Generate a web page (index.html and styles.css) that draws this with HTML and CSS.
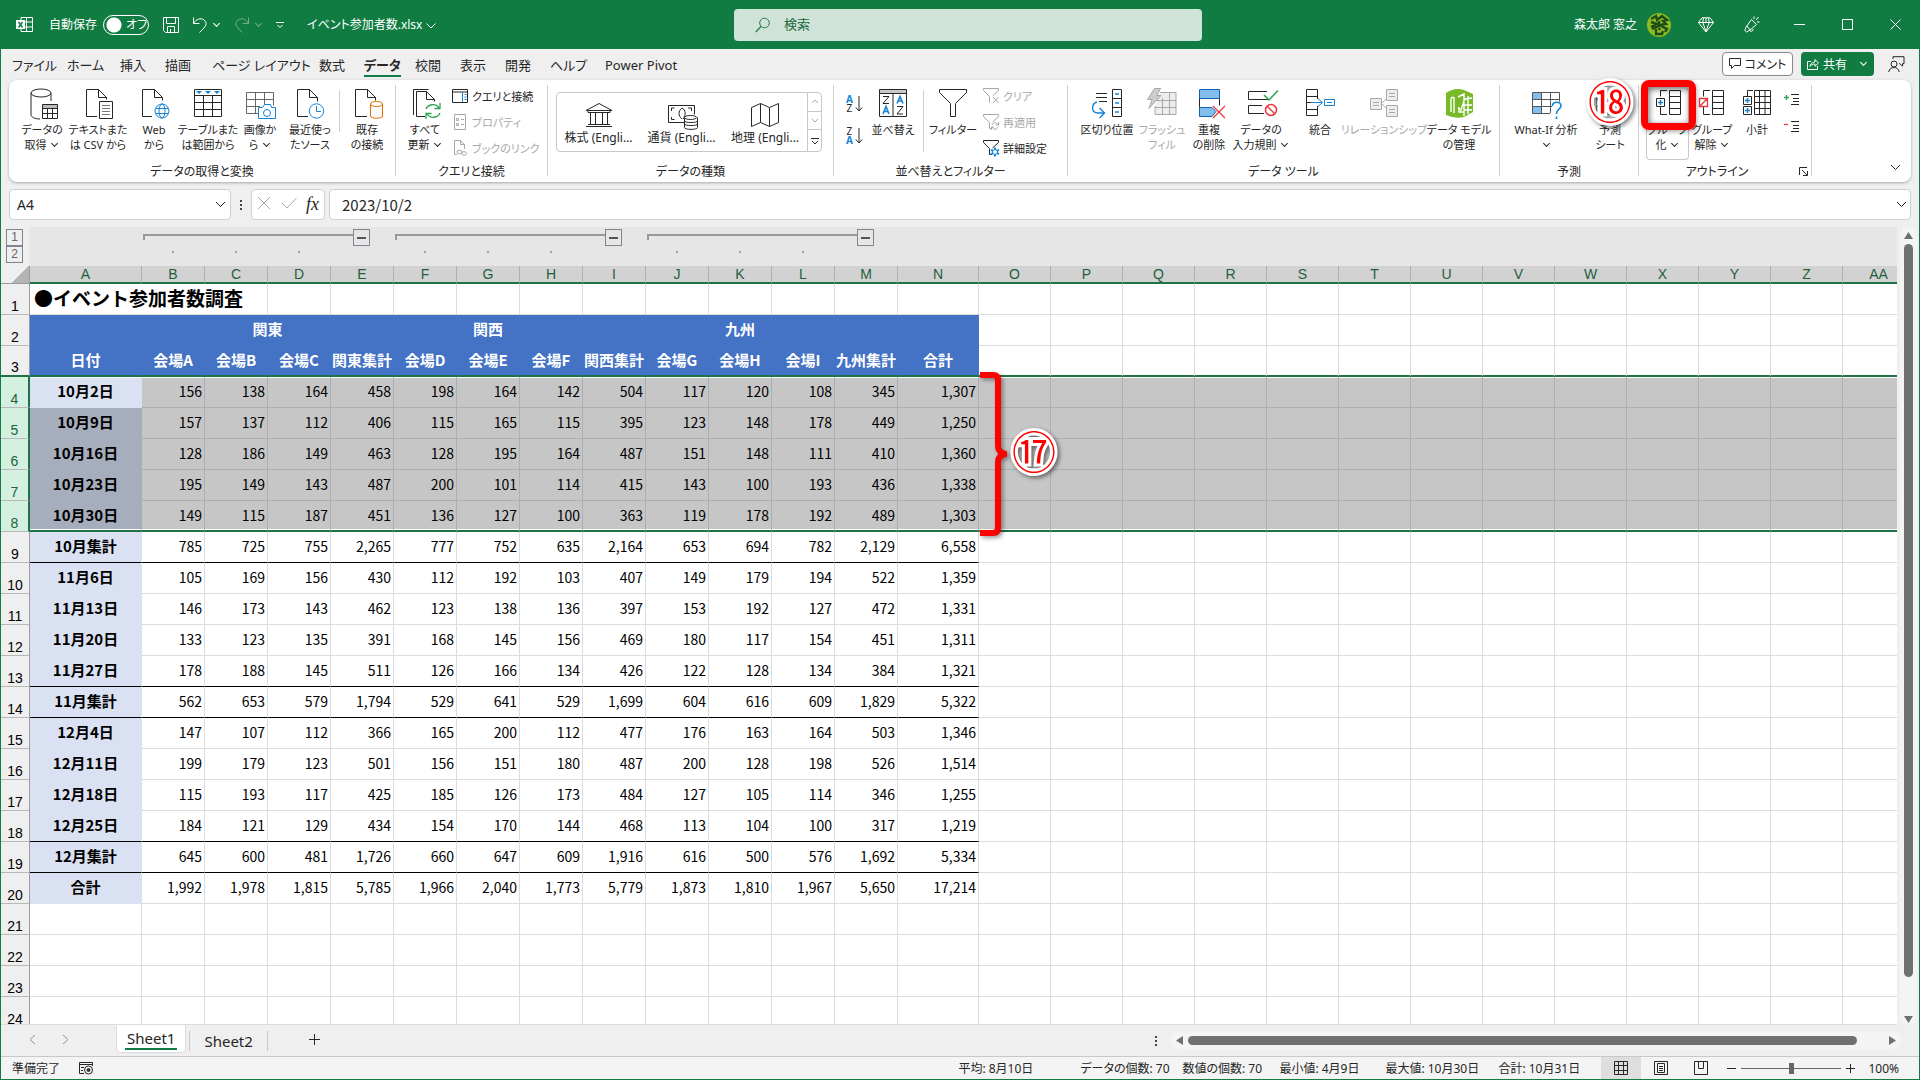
FILE: index.html
```html
<!DOCTYPE html>
<html lang="ja">

<head>
    <meta charset="UTF-8">
    <title>イベント参加者数.xlsx - Excel</title>
    <link rel="stylesheet" href="styles.css">
</head>

<body>
    <header class="titlebar">
        <svg class="app-logo" width="18" height="18" viewBox="0 0 18 18" fill="none" stroke="#fff">
            <path d="M5 4V1.500h11.500v14H5V13M10.500 1.500v14M5 6h11.500M5 11h11.500" />
            <rect x="0" y="4" width="9" height="9" fill="#fff" stroke="none" />
            <path d="M2.500 6l4 5.500M6.500 6l-4 5.500" stroke="#107c41" stroke-width="1.500" />
        </svg>
        <label class="autosave">自動保存
            <input type="checkbox" class="autosave-input">
            <span class="autosave-switch">オフ</span>
        </label>
        <div class="quick-access">
            <button aria-label="保存"><svg width="16" height="16" viewBox="0 0 16 16"><path d="M.5.5h15v15h-13l-2-2zM3.500.5v6h9v-6M4.500 15.500v-6h7v6M7.500 12v3" /></svg></button>
            <button aria-label="元に戻す"><svg width="16" height="16" viewBox="0 0 16 16"><path d="M1.500.5v6h6M1.500 6.500C4 2 9 .5 12 3s2.500 5 0 8l-4.500 4.500" /></svg><i class="caret"></i></button>
            <button class="faded" aria-label="やり直し"><svg width="16" height="16" viewBox="0 0 16 16"><path d="M14.500.5v6h-6M14.500 6.500C12 2 7 .5 4 3s-2.500 5 0 8l4.500 4.500" /></svg><i class="caret"></i></button>
            <button aria-label="カスタマイズ"><svg width="8" height="8" viewBox="0 0 8 8"><path d="M0 1.500h8M1.500 4l2.500 2.500L6.500 4" /></svg></button>
        </div>
        <button class="file-name">イベント参加者数.xlsx <svg width="10" height="6" viewBox="0 0 10 6"><path d="M.5.500L5 5 9.500.500" /></svg></button>
        <label class="search">
            <svg width="16" height="16" viewBox="0 0 16 16" fill="none" stroke="#2b7a50"><circle cx="9.500" cy="6" r="4.800" /><path d="M6 9.500L.8 15" stroke-width="1.300" /></svg>
            <input type="text" placeholder="検索" aria-label="検索">
        </label>
        <div class="account">
            <span>森太郎 窓之</span>
            <svg width="24" height="24" viewBox="0 0 24 24"><circle cx="12" cy="12" r="12" fill="#8dbb22" /><path d="M4 6l5-3 1 4 5-4 5 4-4 1 3 3-6 1M4 9l6 2-6 3M12 8v5l-7 3M14 13l6 3-2 3M9 16v5h6l1-3M12 15l1 2" fill="none" stroke="#1d4d16" stroke-width="2.400" /></svg>
        </div>
        <button class="title-icon" aria-label="プレミアム"><svg width="16" height="16" viewBox="0 0 16 16"><path d="M4 .8h8l3.500 4.700L8 15 .5 5.500zM.5 5.500h15M5.500.8L4.800 5.500 8 14.500l3.200-9L10.500.8M8 .8v4.700" /></svg></button>
        <button class="title-icon" aria-label="近日公開"><svg width="16" height="17" viewBox="0 0 16 17"><path d="M7.500 3.500l5 5L6 14l-3.500 2L.8 14.500 2 11zM3 10l3 4c0 2 3 2 3-1M10 3V.5M12 4l2.500-3M13 6h2.500" /></svg></button>
        <button class="window-button" aria-label="最小化"><svg width="11" height="11" viewBox="0 0 11 11"><path d="M0 5.500h11" /></svg></button>
        <button class="window-button" aria-label="最大化"><svg width="11" height="11" viewBox="0 0 11 11"><path d="M.5.5h10v10H.5z" /></svg></button>
        <button class="window-button" aria-label="閉じる"><svg width="11" height="11" viewBox="0 0 11 11"><path d="M.5.5l10 10M10.500.5l-10 10" /></svg></button>
    </header>

    <nav class="tabs">
        <div class="tab-list">
            <a href="#">ファイル</a>
            <a href="#">ホーム</a>
            <a href="#">挿入</a>
            <a href="#">描画</a>
            <a href="#">ページ レイアウト</a>
            <a href="#">数式</a>
            <a href="#" class="active">データ</a>
            <a href="#">校閲</a>
            <a href="#">表示</a>
            <a href="#">開発</a>
            <a href="#">ヘルプ</a>
            <a href="#">Power Pivot</a>
        </div>
        <div class="tab-actions">
            <button class="comment-button"><svg width="12" height="12" viewBox="0 0 12 12"><path d="M.5.500h11v7H5.500l-3 3v-3h-2z" /></svg>コメント</button>
            <button class="share-button"><svg width="12" height="12" viewBox="0 0 12 12"><path d="M4 3.500H.5v8h10V8M3 8.500C3.500 5 6 4 8 4V1.500L11.500 5 8 8.300V6C6 6 4 6.500 3 8.500z" /></svg>共有<i class="caret"></i></button>
            <button class="presence-button" aria-label="共同作業"><svg width="17" height="17" viewBox="0 0 17 17"><circle cx="6" cy="8" r="3" /><path d="M.8 16c.4-6 9.800-6 10.400 0M5 3V.7h11v7h-1.500v2.500L12 7.700h-1" /></svg></button>
        </div>
    </nav>

    <section class="ribbon">
        <div class="group group-get">
            <div class="group-body">
                <button class="tool"><svg viewBox="0 0 32 32"><path d="M5 5v22c0 2 4 4 9 4M25 5v8" /><ellipse cx="15" cy="5" rx="10" ry="4" /><path d="M16.500 16.500h15v14h-15zM16.500 20.500h15M16.500 25.500h15M21.500 20v11M26.500 20v11" /><path d="M17 17h14v3H17z" fill="#bbb" stroke="none" /></svg>データの<br>取得 <i class="caret"></i></button>
                <button class="tool"><svg viewBox="0 0 32 32"><path d="M15 28.500H4.500v-27h12l8 8v2M16.500 1.500v8h8" /><path d="M17.500 13.500h13v17h-13z" fill="#fff" /><path d="M20 17.500h8M20 20.500h8M20 23.500h8M20 26.500h8" stroke="#777" /></svg>テキストまた<br>は CSV から</button>
                <button class="tool"><svg viewBox="0 0 32 32"><path d="M14 28.500H4.500v-27h12l8 8v3M16.500 1.500v8h8" /><g class="blue"><circle cx="24" cy="23" r="7" fill="#fff" /><ellipse cx="24" cy="23" rx="3" ry="7" /><path d="M18 20.500h12M17.500 25.500h13" /></g></svg>Web<br>から</button>
                <button class="tool"><svg viewBox="0 0 32 32"><path d="M2.500 1.500h27v27h-27zM2.500 7.500h27M2.500 14.500h27M2.500 21.500h27M11.500 8v20M20.500 8v20" /><path d="M4 3h6l-3 3zM13 3h6l-3 3zM22 3h6l-3 3z" fill="#1484d6" stroke="none" /></svg>テーブルまた<br>は範囲から</button>
                <button class="tool"><svg viewBox="0 0 32 32"><path d="M14 25.500H2.500v-21h27v13M2.500 11.500h27M2.500 18.500H16M11.500 5v20M20.500 5v12" stroke="#666" /><path class="blue" d="M14.500 19.500h4l2-3h6l1 3h4v11h-17z" fill="#fff" /><circle class="blue" cx="23" cy="25" r="3.500" /></svg>画像か<br>ら <i class="caret"></i></button>
                <button class="tool"><svg viewBox="0 0 32 32"><path d="M14 28.500H3.500v-27h12l8 8v4M15.500 1.500v8h8" /><g class="blue"><circle cx="22.500" cy="23" r="7.200" fill="#fff" /><path d="M22.500 18v5.500H27" /></g></svg>最近使っ<br>たソース</button>
                <span class="tool-separator"></span>
                <button class="tool"><svg viewBox="0 0 32 32"><path d="M16 28.500H4.500v-27h12l8 8v3M16.500 1.500v8h8" /><path d="M19.500 16v12c0 3 12 3 12 0V16" fill="#fafafa" stroke="#e06c00" /><ellipse cx="25.500" cy="16" rx="6" ry="2.500" fill="#fff" stroke="#e06c00" /></svg>既存<br>の接続</button>
            </div>
            <h2 class="group-title">データの取得と変換</h2>
        </div>

        <div class="group group-query">
            <div class="group-body">
                <button class="tool"><svg viewBox="0 0 32 32"><path d="M4.500 27V1.500h15M16 28.500H7.500v-25h10l8 8v2M17.500 3.500v8h8" /><path d="M17 21c2-5 10-6 13-1M31 15v5.500h-5.500M31 25c-2 5-10 6-13 1M17 31v-5.500h5.500" stroke="#2da44e" stroke-width="1.300" /></svg>すべて<br>更新 <i class="caret"></i></button>
                <div class="tool-stack">
                    <button><svg viewBox="0 0 16 16"><path d="M.5 1.500h15v13H.5zM.5 4h15" /><path class="blue" d="M10.500 4v10M12.500 6.500h2M12.500 9h2M12.500 11.500h2" /></svg>クエリと接続</button>
                    <button disabled><svg viewBox="0 0 16 16"><path d="M2.500.5h11v15h-11zM4.500 4.500h2v2h-2zM4.500 9.500h2v2h-2zM9 5.500h3M9 10.500h3" /></svg>プロパティ</button>
                    <button disabled><svg viewBox="0 0 16 16"><path d="M5 14.500H2.500V.5h6l4 4V9M8.500.5v4h4" /><ellipse cx="7.500" cy="12" rx="2.500" ry="1.800" /><ellipse cx="12" cy="13.500" rx="2.500" ry="1.800" /></svg>ブックのリンク</button>
                </div>
            </div>
            <h2 class="group-title">クエリと接続</h2>
        </div>

        <div class="group group-types">
            <div class="gallery">
                <button class="gallery-item"><svg viewBox="0 0 28 26"><path d="M1 8.500L14 1.500l13 7zM3 9v1.500h22V9M5.500 11v11M10.500 11v11M17.500 11v11M22.500 11v11M3 22.500h22M1 24.500h26" /></svg>株式 (Engli…</button>
                <button class="gallery-item"><svg viewBox="0 0 28 26"><path d="M17 20.500H.5v-17h26v9M3.500 9v-3h3M3.500 15v2.500h3M20 6h3.500v3M14 17c-4-3-4-8 0-11 4 2 4 7 1 11" /><path d="M16.500 15.500v10c0 2.500 13 2.500 13 0v-10M16.500 19c0 2 13 2 13 0M16.500 22c0 2 13 2 13 0" fill="#fff" /><ellipse cx="22.500" cy="15.500" rx="6" ry="2" fill="#fff" /></svg>通貨 (Engli…</button>
                <button class="gallery-item"><svg viewBox="0 0 28 26"><path d="M.5 5.500l9-4 9 4 9-4v19l-9 4-9-4-9 4zM9.500 1.500v19M18.500 5.500v19" /></svg>地理 (Engli…</button>
                <div class="gallery-scroll">
                    <button aria-label="前へ" disabled><svg width="8" height="5" viewBox="0 0 8 5"><path d="M1 4l3-3 3 3" /></svg></button>
                    <button aria-label="次へ" disabled><svg width="8" height="5" viewBox="0 0 8 5"><path d="M1 1l3 3 3-3" /></svg></button>
                    <button aria-label="その他"><svg width="8" height="8" viewBox="0 0 8 8"><path d="M0 1.500h8M1 4l3 3 3-3" /></svg></button>
                </div>
            </div>
            <h2 class="group-title">データの種類</h2>
        </div>

        <div class="group group-sort">
            <div class="group-body">
                <div class="az-stack">
                    <button aria-label="昇順"><span class="az"><b>A</b><em>Z</em></span><svg width="8" height="18" viewBox="0 0 8 18"><path d="M4 1v15M.8 12.500L4 16l3.200-3.500" /></svg></button>
                    <button aria-label="降順"><span class="az"><em>Z</em><b>A</b></span><svg width="8" height="18" viewBox="0 0 8 18"><path d="M4 1v15M.8 12.500L4 16l3.200-3.500" /></svg></button>
                </div>
                <button class="tool"><svg viewBox="0 0 32 32"><path d="M2.500 1.500h27v27h-27zM2.500 5.500h27M16 5v23" /><path d="M3 2h26v3H3z" fill="#c8c8c8" stroke="none" /><path d="M6 8.500h6l-6 7h6M20 18.500h6l-6 7.500h6" /><path class="blue" d="M6 26l3-7.500 3 7.500M7 23.500h4M20 15.500l3-7 3 7M21 13h4" stroke-width="1.600" /></svg>並べ替え</button>
                <span class="tool-separator"></span>
                <button class="tool"><svg viewBox="0 0 32 32"><path d="M2.500 1.500h27v3l-11 11v13h-5v-13l-11-11z" /></svg>フィルター</button>
                <div class="tool-stack">
                    <button disabled><svg viewBox="0 0 16 16"><path d="M.5.500h15v2l-6 5.500M.5.500v2l6 6v6M10 9l5.500 6M15.500 9L10 15" /></svg>クリア</button>
                    <button disabled><svg viewBox="0 0 16 16"><path d="M.5.500h15v2l-6 5.500M.5.500v2l6 6v6h2M9 11c1-3 5-3 6 0M15.500 8v3H13M15 13c-1 3-5 3-6 0M8.500 16v-3H11" /></svg>再適用</button>
                    <button><svg viewBox="0 0 16 16"><path d="M.5.500h15v2l-6 5.500M.5.500v2l6 6v6h2" /><circle class="blue" cx="12" cy="12" r="2.500" /><path class="blue" d="M12 7.500v2M12 14.500v2M8 9.800l2 1M14 13.200l2 1M8 14.200l2-1M14 10.800l2-1" stroke-width="2" /></svg>詳細設定</button>
                </div>
            </div>
            <h2 class="group-title">並べ替えとフィルター</h2>
        </div>

        <div class="group group-tools">
            <div class="group-body">
                <button class="tool"><svg viewBox="0 0 32 32"><path d="M5 5.500h11M5 9.500h11M8 13.500h8M21.500 1.500h9v27h-9zM21.500 10.500h9M21.500 19.500h9" /><path class="blue" d="M24 6h4M24 15h4M24 24h4M6 14C0 16 0 25 7 25h6M8.500 20l5 5-5 5" stroke-width="1.400" /></svg>区切り位置</button>
                <button class="tool" disabled><svg viewBox="0 0 32 32"><path d="M9 18v8.500h21v-22H14M9 12.500h21M9 19.500h21M16.500 10v16M23.500 5v21" fill="#eee" /><path d="M8.500.500h6L11 7.500h4L3 20.500l3-9H1.500z" fill="#ccc" /></svg>フラッシュ<br>フィル</button>
                <button class="tool"><svg viewBox="0 0 32 32"><path d="M6.500 1.500h20v9h-20zM19 28.500H6.500v-9H19l4 4z" fill="#83beec" stroke="#0f64b4" /><path d="M6.500 10.500v9M26.500 10.500v7" /><path d="M20 18l12 12M32 18L20 30" stroke="#e8383d" stroke-width="1.300" /></svg>重複<br>の削除</button>
                <button class="tool"><svg viewBox="0 0 32 32"><path d="M22 3.500H3.500v8H23M17 17.500H3.500v8H19" /><path d="M19 7l5 5L33 2.500" stroke="#2da44e" stroke-width="1.500" /><g stroke="#e8383d" stroke-width="1.500"><circle cx="26" cy="22" r="5.500" /><path d="M22 18l8 8" /></g></svg>データの<br>入力規則 <i class="caret"></i></button>
                <button class="tool"><svg viewBox="0 0 32 32"><path d="M13.500 11v-9.500h-11v26h11V18M2.500 8.500h11M2.500 14.500h6M2.500 21.500h11" /><path class="blue" d="M7 14.500h11M14 10.500l4.500 4-4.500 4M20.500 11.500h10v6h-10zM23 14.500h5" /></svg>統合</button>
                <button class="tool" disabled><svg viewBox="0 0 32 32"><path d="M2.500 10.500h11v11h-11zM18.500 1.500h11v11h-11zM18.500 17.500h11v11h-11zM13.500 15.500l5-5M13.500 15.500l5 5" fill="#eee" /><path d="M5 14.500h6M5 17.500h6M21 5.500h6M21 8.500h6M21 21.500h6M21 24.500h6" /></svg>リレーションシップ</button>
                <button class="tool"><svg viewBox="0 0 32 32"><path d="M3 5Q12-1 21 2l9 4v18l-9 5q-9 2-18-2z" fill="#79b927" stroke="none" /><path d="M8 10v14M11 9v16M8 9.500h3M15 9l6-3v22M15 20l3 2 4-12M16 19v5h5M21 11l8-1M21 17h8M21 22h8M25 8v18" stroke="#fff" stroke-width="1.400" /></svg>データ モデル<br>の管理</button>
            </div>
            <h2 class="group-title">データ ツール</h2>
        </div>

        <div class="group group-forecast">
            <div class="group-body">
                <button class="tool"><svg viewBox="0 0 32 32"><path d="M3 4h9v8H3zM3 19h9v7H3z" fill="#83beec" stroke="none" /><path d="M20 25.500H2.500v-21h27v9M2.500 11.500h27M2.500 18.500H22M11.500 5v21M20.500 5v20" stroke="#555" /><path class="blue" d="M22.500 18c0-5 8.500-5 8.500 0 0 3-4.500 3-4.500 8M26.500 28.500v2.500" stroke-width="1.600" /></svg>What-If 分析<br><i class="caret"></i></button>
                <button class="tool"><svg viewBox="0 0 32 32"><path d="M2.500 4.500h26v22h-26zM2.500 11.500h26M2.500 18.500h26M11.500 5v21M20.500 5v21" stroke="#888" /></svg>予測<br>シート</button>
            </div>
            <h2 class="group-title">予測</h2>
            <span class="step step-18">⑱</span>
        </div>

        <div class="group group-outline">
            <div class="group-body">
                <button class="tool highlighted"><svg viewBox="0 0 32 32"><path d="M17.500 2.500h11v24h-11zM17.500 8.500h11M17.500 14.500h11M17.500 20.500h11M15 2.500H8.500v6M15 26.500H8.500v-8M4.500 10.500h8v8h-8z" /><path class="blue" d="M6 14.500h5M8.500 12v5" stroke-width="1.500" /></svg>グループ<br>化 <i class="caret"></i></button>
                <button class="tool"><svg viewBox="0 0 32 32"><path d="M16.500 2.500h11v24h-11zM16.500 8.500h11M16.500 14.500h11M16.500 20.500h11M14 2.500H7.500v6M14 26.500H7.500v-8" /><path d="M3.500 10.500h8v8h-8zM3.500 18.500l8-8" stroke="#e8383d" stroke-width="1.300" /></svg>グループ<br>解除 <i class="caret"></i></button>
                <button class="tool"><svg viewBox="0 0 32 32"><path d="M13.500 2.500h16v24h-16zM13.500 8.500h16M13.500 14.500h16M13.500 20.500h16M18.500 3v23M24 3v23M12 2.500H6.500v6M2.500 8.500h8v8h-8zM2.500 18.500h8v8h-8z" /><path class="blue" d="M4 12.500h5M6.500 10v5M4 22.500h5M6.500 20v5" stroke-width="1.500" /></svg>小計</button>
                <div class="detail-stack">
                    <button aria-label="詳細の表示"><svg width="16" height="14" viewBox="0 0 16 14"><path d="M7 2.500h8M9 6.500h6M9 9.500h6M7 12.500h8" /><path d="M0 5.500h5M2.500 3v5" stroke="#2da44e" stroke-width="1.300" /></svg></button>
                    <button aria-label="詳細を表示しない"><svg width="16" height="14" viewBox="0 0 16 14"><path d="M7 2.500h8M9 6.500h6M9 9.500h6M7 12.500h8" /><path d="M0 5.500h4" stroke="#e8383d" stroke-width="1.300" /></svg></button>
                </div>
            </div>
            <h2 class="group-title">アウトライン</h2>
            <button class="launcher" aria-label="アウトラインの設定"><svg width="9" height="9" viewBox="0 0 9 9"><path d="M.5 8V.500H8M3 3l5 5M8.500 4v4.500H4" /></svg></button>
        </div>
        <button class="collapse" aria-label="リボンを折りたたむ"><svg width="11" height="7" viewBox="0 0 11 7"><path d="M1 1l4.500 4.500L10 1" /></svg></button>
    </section>

    <div class="formula-row">
        <div class="name-box">
            <input type="text" value="A4" aria-label="名前ボックス">
            <svg width="11" height="7" viewBox="0 0 11 7"><path d="M1 1l4.500 4.500L10 1" /></svg>
        </div>
        <span class="dots"></span>
        <div class="formula-buttons">
            <button class="faded" aria-label="キャンセル"><svg width="14" height="14" viewBox="0 0 14 14"><path d="M1 1l12 12M13 1L1 13" /></svg></button>
            <button class="faded" aria-label="入力"><svg width="16" height="12" viewBox="0 0 16 12"><path d="M1 6l5 5L15.500 1" /></svg></button>
            <button class="fx">fx</button>
        </div>
        <div class="formula-box">
            <input type="text" value="2023/10/2" aria-label="数式バー">
            <svg width="11" height="7" viewBox="0 0 11 7"><path d="M1 1l4.500 4.500L10 1" /></svg>
        </div>
    </div>

    <main class="workbook">
        <div class="sheet">
            <div class="outline">
                <div class="outline-levels"><button>1</button><button>2</button></div>
                <div class="outline-columns">
                    <div class="outline-group"><i></i><i></i><i></i><button aria-label="B:D 列を折りたたむ"></button></div>
                    <div class="outline-group"><i></i><i></i><i></i><button aria-label="F:H 列を折りたたむ"></button></div>
                    <div class="outline-group"><i></i><i></i><i></i><button aria-label="J:L 列を折りたたむ"></button></div>
                </div>
            </div>
            <table class="cells" id="cells">
                <colgroup id="columns"></colgroup>
                <thead id="letters"></thead>
                <tbody id="rows"></tbody>
            </table>
            <svg class="bracket" width="28" height="166" viewBox="0 0 28 166"><path d="M1 4h13q5 0 5 5v66q0 6 7 8-7 2-7 8v66q0 5-5 5H1" /></svg>
            <span class="step step-17">⑰</span>
        </div>
        <div class="scroll-vertical">
            <i class="arrow-up"></i>
            <span></span>
            <i class="arrow-down"></i>
        </div>
    </main>

    <div class="sheet-bar">
        <button class="sheet-nav" aria-label="前のシート"><svg width="7" height="11" viewBox="0 0 7 11"><path d="M6 1L1 5.500 6 10" /></svg></button>
        <button class="sheet-nav" aria-label="次のシート"><svg width="7" height="11" viewBox="0 0 7 11"><path d="M1 1l5 4.500L1 10" /></svg></button>
        <button class="sheet-tab active"><span>Sheet1</span></button>
        <button class="sheet-tab"><span>Sheet2</span></button>
        <button class="sheet-add" aria-label="新しいシート"><svg width="11" height="11" viewBox="0 0 11 11"><path d="M0 5.500h11M5.500 0v11" /></svg></button>
        <span class="dots"></span>
        <div class="scroll-horizontal">
            <i class="arrow-left"></i>
            <span></span>
            <i class="arrow-right"></i>
        </div>
    </div>

    <footer class="status">
        <span>準備完了</span>
        <button class="macro" aria-label="マクロの記録"><svg width="15" height="14" viewBox="0 0 15 14"><path d="M5 12.500H.5V1.500h13V5M.5 3.500h13M2 6.500h3M2 9.500h2" /><circle cx="9.500" cy="9" r="4" /><circle cx="9.500" cy="9" r="1.500" fill="#333" /></svg></button>
        <div class="summary">
            <span>平均: 8月10日</span>
            <span>データの個数: 70</span>
            <span>数値の個数: 70</span>
            <span>最小値: 4月9日</span>
            <span>最大値: 10月30日</span>
            <span>合計: 10月31日</span>
        </div>
        <div class="views">
            <button class="active" aria-label="標準"><svg width="14" height="14" viewBox="0 0 14 14"><path d="M.5.500h13v13H.5zM.5 4.500h13M.5 9.500h13M4.500.500v13M9.500.500v13" /></svg></button>
            <button aria-label="ページ レイアウト"><svg width="14" height="14" viewBox="0 0 14 14"><path d="M.5.500h13v13H.5zM3.500 2.500h7v9h-7zM5 5.500h4M5 7.500h4M5 9.500h4" /></svg></button>
            <button aria-label="改ページ プレビュー"><svg width="14" height="14" viewBox="0 0 14 14"><path d="M.5.500h13v13H.5zM4.500.500v7h5v-7" /></svg></button>
        </div>
        <div class="zoom">
            <button aria-label="縮小"><svg width="9" height="9" viewBox="0 0 9 9"><path d="M0 4.500h9" /></svg></button>
            <input type="range" min="0" max="100" value="50" aria-label="ズーム">
            <button aria-label="拡大"><svg width="9" height="9" viewBox="0 0 9 9"><path d="M0 4.500h9M4.500 0v9" /></svg></button>
            <button>100%</button>
        </div>
    </footer>
    <script src="sheet.js"></script>
</body>

</html>
```

FILE: styles.css
```css
*,
*::before,
*::after {
    box-sizing: border-box;
}

body {
    display: flex;
    flex-direction: column;
    height: 100vh;
    margin: 0;
    overflow: hidden;
    border: 1px solid #107c41;
    border-top: 0;
    background: #EFEFEF;
    color: #262626;
    font-family: "Noto Sans", "Noto Sans CJK JP", sans-serif;
    font-size: 12px;
    line-height: 15px;
    font-feature-settings: "palt";
}

button,
input {
    margin: 0;
    padding: 0;
    border: 0;
    background: none;
    color: inherit;
    font: inherit;
    font-feature-settings: inherit;
}

button svg,
.name-box svg,
.formula-box svg {
    fill: none;
    stroke: currentColor;
}

.caret {
    display: inline-block;
    width: 5px;
    height: 5px;
    margin: 0 2px 3px 3px;
    border-right: 1px solid currentColor;
    border-bottom: 1px solid currentColor;
    transform: rotate(45deg);
}

.faded {
    opacity: 0.4;
}

.blue {
    stroke: #1484d6;
}

.dots {
    width: 2px;
    height: 10px;
    background: repeating-linear-gradient(#444 0 2px, transparent 2px 4px);
}

/* title bar */

.titlebar {
    display: flex;
    align-items: center;
    flex: none;
    height: 49px;
    padding-left: 15px;
    background: #107c41;
    color: #FFFFFF;
}

.autosave {
    display: flex;
    align-items: center;
    gap: 6px;
    margin-left: 15px;
}

.autosave-input {
    position: absolute;
    opacity: 0;
}

.autosave-switch {
    width: 46px;
    height: 20px;
    padding-left: 22px;
    border: 1px solid #FFFFFF;
    border-radius: 10px;
    line-height: 18px;
    background: radial-gradient(circle at 10px 9px, #fff 7px, transparent 8px);
}

.quick-access {
    display: flex;
    align-items: center;
    gap: 13px;
    width: 144px;
    margin-left: 14px;
}

.quick-access button {
    display: flex;
    align-items: center;
    gap: 3px;
}

.file-name {
    width: 126px;
    white-space: nowrap;
    text-align: left;
}

.search {
    display: flex;
    align-items: center;
    gap: 13px;
    width: 468px;
    height: 32px;
    margin-left: 301px;
    padding-left: 21px;
    border-radius: 4px;
    background: #cfe3d8;
}

.search input::placeholder {
    color: #186a3c;
    font-size: 13px;
}

.account {
    display: flex;
    align-items: center;
    gap: 10px;
    margin: 0 12px 0 auto;
}

.title-icon,
.window-button {
    display: flex;
    justify-content: center;
    width: 46px;
}

.window-button {
    width: 48px;
}

/* ribbon tabs */

.tabs {
    display: flex;
    justify-content: space-between;
    flex: none;
    height: 31px;
    padding: 3px 14px 4px 11px;
}

.tab-list {
    display: grid;
    grid-template-columns: 55px 53px 45px 47px 107px 45px 51px 45px 45px 45px 55px auto;
    align-items: center;
    font-size: 13px;
}

.tab-list a {
    justify-self: start;
    padding-top: 3px;
    border-bottom: 2px solid transparent;
    line-height: 20px;
    color: inherit;
    text-decoration: none;
    white-space: nowrap;
}

.tab-list .active {
    border-color: #107c41;
    font-weight: bold;
}

.tab-actions {
    display: flex;
    align-items: center;
}

.tab-actions button {
    display: flex;
    align-items: center;
    justify-content: center;
    gap: 4px;
    height: 24px;
    border-radius: 4px;
    white-space: nowrap;
}

.tab-actions .comment-button {
    width: 71px;
    border: 1px solid #8a8a8a;
    background: #FFFFFF;
}

.tab-actions .share-button {
    width: 73px;
    margin: 0 14px 0 8px;
    background: #107c41;
    color: #FFFFFF;
}

.share-button .caret {
    margin-left: 10px;
}

/* ribbon */

.ribbon {
    position: relative;
    display: flex;
    flex: none;
    height: 102px;
    margin: 0 8px;
    padding: 5px 0 6px;
    border-radius: 8px;
    background: #FFFFFF;
    box-shadow: 0 1px 3px rgba(0, 0, 0, 0.3);
}

.group {
    position: relative;
    display: flex;
    flex-direction: column;
    justify-content: space-between;
    flex: none;
    border-right: 1px solid #d0d0d0;
}

.group-body {
    display: grid;
    align-items: start;
    padding-top: 3px;
}

.group-title {
    margin: 0 0 -3px;
    font-size: 12px;
    font-weight: normal;
    line-height: 14px;
    text-align: center;
}

.group-get {
    width: 387px;
}

.group-get .group-body {
    grid-template-columns: 56px 56px 56px 52px 52px 48px 10px 46px;
    padding-left: 5px;
}

.group-query {
    width: 152px;
}

.group-query .group-body {
    grid-template-columns: 52px 1fr;
    padding-left: 3px;
}

.group-types {
    width: 286px;
}

.group-sort {
    width: 234px;
}

.group-sort .group-body {
    grid-template-columns: 22px 50px 10px 50px 1fr;
    padding-left: 12px;
}

.group-tools {
    width: 432px;
}

.group-tools .group-body {
    grid-template-columns: 60px 50px 44px 60px 58px 70px 80px;
    padding-left: 9px;
}

.group-forecast {
    width: 139px;
}

.group-forecast .group-body {
    grid-template-columns: 92px 36px;
}

.group-outline {
    width: 173px;
}

.group-outline .group-body {
    grid-template-columns: 43px 46px 44px 1fr;
    padding-left: 7px;
}

.group-outline .group-title {
    padding-right: 16px;
}

.tool {
    margin: 0 -16px;
    font-size: 11px;
    white-space: nowrap;
}

.tool svg {
    display: block;
    width: 32px;
    height: 32px;
    margin: 0 auto 2px;
    overflow: visible;
}

.tool:disabled,
.tool-stack button:disabled,
.gallery-scroll button:disabled {
    color: #a8a8a8;
}

.tool-separator {
    justify-self: center;
    width: 1px;
    height: 42px;
    margin-top: 2px;
    background: #d0d0d0;
}

.group-sort .tool-separator {
    height: 62px;
}

.tool-stack button {
    display: flex;
    align-items: center;
    gap: 4px;
    height: 26px;
    font-size: 11px;
    white-space: nowrap;
}

.tool-stack {
    margin-top: -5px;
    padding-left: 1px;
}

.group-sort .tool-stack {
    padding-left: 5px;
}

.tool-stack svg {
    width: 16px;
    height: 16px;
    overflow: visible;
}

.gallery {
    display: grid;
    grid-template-columns: 83px 83px 84px 14px;
    height: 60px;
    margin: 7px 11px 0 8px;
    border: 1px solid #c8c8c8;
    border-radius: 4px;
}

.gallery-item {
    white-space: nowrap;
}

.gallery-item svg {
    display: block;
    width: 28px;
    height: 26px;
    margin: 2px auto;
    overflow: visible;
}

.gallery-scroll {
    display: grid;
    border-left: 1px solid #c8c8c8;
}

.gallery-scroll button {
    display: flex;
    align-items: center;
    justify-content: center;
}

.gallery-scroll button + button {
    border-top: 1px solid #c8c8c8;
}

.az-stack button {
    display: flex;
    align-items: center;
    gap: 2px;
    height: 32px;
}

.az {
    display: grid;
    font-size: 10px;
    line-height: 9px;
}

.az em {
    font-style: normal;
}

.az b {
    color: #1484d6;
}

.highlighted {
    position: relative;
    margin: 0;
    padding-bottom: 7px;
    border: 1px solid #c8c8c8;
    border-top: 0;
    border-radius: 4px;
}

/* red frame around the icon part of the button */
.highlighted::after {
    content: "";
    position: absolute;
    top: -8px;
    left: -6px;
    width: 55px;
    height: 50px;
    border: 7px solid #ff0000;
    border-radius: 8px;
    box-shadow: inset 1px 2px 6px rgba(0, 0, 0, 0.6), 1px 2px 4px rgba(0, 0, 0, 0.3);
}

.detail-stack {
    display: grid;
    gap: 13px;
    padding: 4px 0 0 5px;
}

.detail-stack svg {
    display: block;
}

.launcher {
    position: absolute;
    right: 3px;
    bottom: 0;
    line-height: 9px;
}

.collapse {
    align-self: flex-end;
    margin: 0 10px 2px auto;
}

.step {
    position: absolute;
    color: #ff0000;
    font-family: "Noto Sans CJK JP", sans-serif;
    font-size: 44px;
    line-height: 44px;
    -webkit-text-stroke: 6px #fff;
    paint-order: stroke fill;
    filter: drop-shadow(2px 2px 2px rgba(0, 0, 0, 0.5));
}

.step-18 {
    top: -7px;
    right: 6px;
}

.step-17 {
    top: 201px;
    left: 1011px;
}

/* formula bar */

.formula-row {
    display: flex;
    align-items: center;
    flex: none;
    height: 45px;
    padding: 0 8px;
}

.name-box,
.formula-buttons,
.formula-box {
    display: flex;
    align-items: center;
    justify-content: space-between;
    height: 31px;
    border: 1px solid #d0d0d0;
    border-radius: 4px;
    background: #FFFFFF;
}

.name-box {
    width: 222px;
    padding: 0 4px 0 7px;
    font-size: 14px;
}

.name-box input,
.formula-box input {
    flex: 1;
    min-width: 0;
}

.formula-row .dots {
    margin: 0 9px;
}

.formula-buttons {
    width: 74px;
    padding: 0 5px;
}

.fx {
    font-family: "Liberation Serif", serif;
    font-size: 18px;
    font-style: italic;
}

.formula-box {
    flex: 1;
    margin-left: 4px;
    padding: 0 3px 0 12px;
    font-family: "Noto Sans CJK JP", sans-serif;
    font-size: 15px;
}

/* sheet */

.workbook {
    display: flex;
    flex: 1;
    min-height: 0;
}

.sheet {
    position: relative;
    flex: 1;
    min-width: 0;
    overflow: hidden;
    border-bottom: 1px solid #dcdcdc;
}

.outline {
    display: flex;
    height: 39px;
    background: #E6E6E6;
    color: #666666;
}

.outline-levels {
    width: 28px;
    padding: 2px 0 0 5px;
    background: #EFEFEF;
}

.outline-levels button {
    display: block;
    width: 17px;
    height: 17px;
    border: 1px solid #7e858f;
    background: #EFEFEF;
    font-family: "Liberation Sans", sans-serif;
}

.outline-columns {
    display: flex;
    padding-left: 113px;
}

.outline-group {
    display: grid;
    grid-template-columns: repeat(4, 63px);
    height: 39px;
    padding-top: 2px;
    background: linear-gradient(#999, #999) 1px 7px / 210px 2px no-repeat, linear-gradient(#999, #999) 1px 7px / 2px 6px no-repeat;
}

.outline-group i {
    width: 2px;
    height: 2px;
    margin: 22px 0 0 30px;
    background: #a0a0a0;
}

.outline-group button {
    width: 17px;
    height: 17px;
    margin-left: 22px;
    border: 1px solid #7e858f;
    background: linear-gradient(#555, #555) center / 9px 2px no-repeat;
}

.cells {
    min-width: 100%;
    table-layout: fixed;
    border-collapse: separate;
    border-spacing: 0;
    background: #FFFFFF;
    color: #000000;
    font-family: "Noto Sans CJK JP", sans-serif;
    font-size: 14px;
    line-height: 20px;
    font-feature-settings: normal;
}

.cells th,
.cells td {
    height: 31px;
    padding: 0 2px 2px;
    border-right: 1px solid #dcdcdc;
    border-bottom: 1px solid #dcdcdc;
    white-space: nowrap;
    overflow: hidden;
    text-align: right;
}

.cells thead th {
    height: 18px;
    padding: 1px 0 0;
    border-color: #b0b0b0;
    border-bottom: 2px solid #1f7246;
    background: #D2D2D2;
    color: #1f5f3d;
    font-family: "Liberation Sans", sans-serif;
    font-weight: normal;
    line-height: 15px;
    text-align: center;
}

.cells thead .corner {
    border-right-color: #9b9b9b;
    border-bottom: 1px solid #9b9b9b;
    background: linear-gradient(135deg, #EFEFEF 62%, #b4b4b4 62%);
}

.cells .row-number {
    padding: 0;
    border-right-color: #9b9b9b;
    border-bottom-color: #b8b8b8;
    background: #EFEFEF;
    font-family: "Liberation Sans", sans-serif;
    font-weight: normal;
    line-height: 15px;
    text-align: center;
    vertical-align: bottom;
}

.cells .title {
    padding-left: 4px;
    font-size: 19px;
    font-weight: bold;
    text-align: left;
}

.cells .heading {
    padding: 0 0 2px;
    border-color: #4472c4;
    background: #4472c4;
    color: #FFFFFF;
    font-size: 15px;
    font-weight: bold;
    text-align: center;
}

.cells .date {
    border-color: #d9e1f2;
    background: #d9e1f2;
    font-size: 15px;
    font-weight: bold;
    text-align: center;
}

.cells .above-selection > * {
    border-bottom: 2px solid #1f7246;
}

.cells .selected > td {
    border-color: #afafaf;
    background: #c6c6c6;
}

.cells .selected > .row-number {
    border-right: 2px solid #1f7246;
    background: #d3f0e0;
    color: #1f5f3d;
}

.cells .selected > .date {
    border-color: #a6aebd;
    background: #a6aebd;
}

.cells .selected > .date.current {
    border-color: #d9e1f2;
    background: #d9e1f2;
}

.cells .above-selection + .selected > td,
.cells .above-selection + .selected > .date {
    box-shadow: inset 0 1px #fff;
}

.cells .selection-end > td,
.cells .selection-end > .date {
    border-bottom: 2px solid #1f7246;
    box-shadow: inset 0 -1px #fff;
}

.cells .ruled > .filled {
    border-bottom: 1px solid #000000;
}

.bracket {
    position: absolute;
    top: 144px;
    left: 978px;
    fill: none;
    stroke: #ff0000;
    stroke-width: 6px;
    filter: drop-shadow(2px 2px 2px rgba(0, 0, 0, 0.4));
}

.scroll-vertical {
    display: flex;
    flex-direction: column;
    align-items: center;
    gap: 5px;
    width: 17px;
    margin: 0 2px 0 3px;
    padding: 5px 0 2px;
    border-radius: 8px;
    background: #f4f4f4;
}

.scroll-vertical span {
    flex: 1;
    width: 9px;
    margin-bottom: 34px;
    border-radius: 5px;
    background: #707070;
}

.arrow-up,
.arrow-down,
.arrow-left,
.arrow-right {
    width: 9px;
    height: 7px;
    background: #707070;
    clip-path: polygon(50% 0, 100% 100%, 0 100%);
}

.arrow-down {
    clip-path: polygon(0 0, 100% 0, 50% 100%);
}

.arrow-left,
.arrow-right {
    width: 7px;
    height: 9px;
    clip-path: polygon(100% 0, 100% 100%, 0 50%);
}

.arrow-right {
    clip-path: polygon(0 0, 100% 50%, 0 100%);
}

/* sheet tabs */

.sheet-bar {
    display: flex;
    align-items: center;
    flex: none;
    height: 31px;
    padding-right: 18px;
}

.sheet-nav {
    width: 33px;
    color: #909090;
}

.sheet-nav:first-child {
    margin-left: 15px;
}

.sheet-tab {
    height: 20px;
    padding: 0 14px;
    border-right: 1px solid #c8c8c8;
    border-left: 1px solid #c8c8c8;
    font-size: 15px;
    line-height: 20px;
}

.sheet-tab.active {
    align-self: flex-start;
    height: 29px;
    margin: -1px 3px 0 34px;
    padding: 2px 8px 0;
    border: 1px solid #dcdcdc;
    border-top: 0;
    border-radius: 0 0 5px 5px;
    background: #FFFFFF;
}

.sheet-tab.active span {
    display: block;
    padding: 0 2px;
    border-bottom: 2px solid #107c41;
}

.sheet-add {
    margin-left: 41px;
}

.sheet-bar .dots {
    margin-left: auto;
}

.scroll-horizontal {
    display: flex;
    align-items: center;
    gap: 5px;
    flex: 0 0 730px;
    height: 17px;
    margin-left: 14px;
    padding: 0 5px;
    border-radius: 8px;
    background: #f4f4f4;
}

.scroll-horizontal span {
    flex: 1;
    height: 9px;
    margin-right: 27px;
    border-radius: 5px;
    background: #707070;
}

/* status bar */

.status {
    display: flex;
    align-items: center;
    flex: none;
    height: 23px;
    padding: 0 20px 0 11px;
    border-top: 1px solid #c8c8c8;
    background: #F4F4F4;
    white-space: nowrap;
}

.status button {
    display: flex;
    justify-content: center;
    align-items: center;
}

.macro {
    margin-left: 19px;
}

.summary {
    display: grid;
    grid-template-columns: 122px 102px 97px 106px 113px 103px;
    margin-left: auto;
}

.views {
    display: flex;
    align-self: stretch;
}

.views button {
    width: 40px;
}

.views .active {
    background: #dedede;
}

.zoom {
    display: flex;
    align-items: center;
    gap: 5px;
    margin-left: 6px;
}

.zoom button:last-child {
    margin-left: 8px;
}

.zoom input {
    width: 100px;
    height: 12px;
    appearance: none;
    background: linear-gradient(#666, #666) center / 100% 1px no-repeat;
}

.zoom input::-webkit-slider-thumb {
    width: 5px;
    height: 11px;
    appearance: none;
    background: #666666;
}
```

FILE: sheet.js
```javascript
const letters = 'A B C D E F G H I J K L M N O P Q R S T U V W X Y Z AA'.split(' ');
const headings = ['日付', '会場A', '会場B', '会場C', '関東集計', '会場D', '会場E', '会場F', '関西集計', '会場G', '会場H', '会場I', '九州集計', '合計'];
const data = [
    ['10月2日', 156, 138, 164, 458, 198, 164, 142, 504, 117, 120, 108, 345, 1307],
    ['10月9日', 157, 137, 112, 406, 115, 165, 115, 395, 123, 148, 178, 449, 1250],
    ['10月16日', 128, 186, 149, 463, 128, 195, 164, 487, 151, 148, 111, 410, 1360],
    ['10月23日', 195, 149, 143, 487, 200, 101, 114, 415, 143, 100, 193, 436, 1338],
    ['10月30日', 149, 115, 187, 451, 136, 127, 100, 363, 119, 178, 192, 489, 1303],
    ['10月集計', 785, 725, 755, 2265, 777, 752, 635, 2164, 653, 694, 782, 2129, 6558],
    ['11月6日', 105, 169, 156, 430, 112, 192, 103, 407, 149, 179, 194, 522, 1359],
    ['11月13日', 146, 173, 143, 462, 123, 138, 136, 397, 153, 192, 127, 472, 1331],
    ['11月20日', 133, 123, 135, 391, 168, 145, 156, 469, 180, 117, 154, 451, 1311],
    ['11月27日', 178, 188, 145, 511, 126, 166, 134, 426, 122, 128, 134, 384, 1321],
    ['11月集計', 562, 653, 579, 1794, 529, 641, 529, 1699, 604, 616, 609, 1829, 5322],
    ['12月4日', 147, 107, 112, 366, 165, 200, 112, 477, 176, 163, 164, 503, 1346],
    ['12月11日', 199, 179, 123, 501, 156, 151, 180, 487, 200, 128, 198, 526, 1514],
    ['12月18日', 115, 193, 117, 425, 185, 126, 173, 484, 127, 105, 114, 346, 1255],
    ['12月25日', 184, 121, 129, 434, 154, 170, 144, 468, 113, 104, 100, 317, 1219],
    ['12月集計', 645, 600, 481, 1726, 660, 647, 609, 1916, 616, 500, 576, 1692, 5334],
    ['合計', 1992, 1978, 1815, 5785, 1966, 2040, 1773, 5779, 1873, 1810, 1967, 5650, 17214]
];
const ruledRows = [9, 13, 14, 18, 19];

const widths = [29, 112, ...Array(12).fill(63), 81, ...Array(13).fill(72)];
document.getElementById('cells').style.width = widths.reduce((sum, w) => sum + w) + 'px';
document.getElementById('columns').innerHTML = widths.map(w => `<col style="width: ${w}px">`).join('');
document.getElementById('letters').innerHTML = '<tr><th class="corner"></th>' + letters.map(l => `<th>${l}</th>`).join('') + '</tr>';

function blanks(count) {
    return '<td></td>'.repeat(count);
}

function rowCells(n) {
    if (n === 1) {
        return '<td class="title" colspan="3">●イベント参加者数調査</td>' + blanks(24);
    }
    if (n === 2) {
        return '<td class="heading"></td><th class="heading" colspan="4">関東</th><th class="heading" colspan="3">関西</th><td class="heading"></td>' +
            '<th class="heading" colspan="3">九州</th><td class="heading"></td><td class="heading"></td>' + blanks(13);
    }
    if (n === 3) {
        return headings.map(h => `<th class="heading">${h}</th>`).join('') + blanks(13);
    }
    const record = data[n - 4];
    if (!record) {
        return blanks(27);
    }
    const [date, ...values] = record;
    return `<th class="date filled${n === 4 ? ' current' : ''}">${date}</th>` +
        values.map(v => `<td class="filled">${v.toLocaleString('en-US')}</td>`).join('') + blanks(13);
}

let html = '';
for (let n = 1; n <= 24; n++) {
    const names = [];
    if (n === 3) names.push('above-selection');
    if (n >= 4 && n <= 8) names.push('selected');
    if (n === 8) names.push('selection-end');
    if (ruledRows.includes(n)) names.push('ruled');
    html += `<tr class="${names.join(' ')}"><th class="row-number">${n}</th>${rowCells(n)}</tr>`;
}
document.getElementById('rows').innerHTML = html;
```
